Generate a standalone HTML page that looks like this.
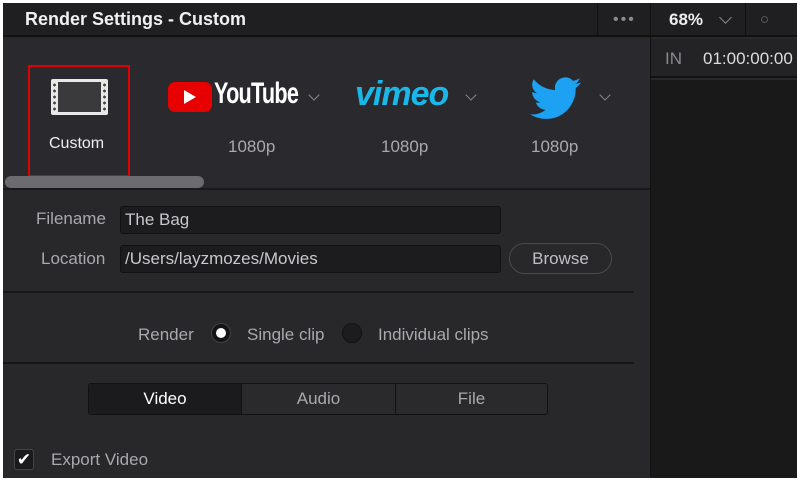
<!DOCTYPE html>
<html><head><style>
*{margin:0;padding:0;box-sizing:border-box}
body{width:800px;height:481px;background:#fff;position:relative;overflow:hidden;font-family:"Liberation Sans",sans-serif}
.a{position:absolute}
#main{left:3px;top:3px;width:794px;height:475px;background:#28282b;overflow:hidden}
.t{color:#a9a9ad;font-size:17px}
.inp{background:#1c1c1e;border:1px solid #111;border-radius:3px;color:#c8c8cc;font-size:17px;padding:3px 4px;line-height:20px}
</style></head><body>
<div id="main" class="a">
 <div class="a" style="left:0;top:0;width:794px;height:34px;background:#1f1f22;border-bottom:2px solid #111"></div>
 <div class="a" style="left:22px;top:6px;color:#f0f0f0;font-weight:bold;font-size:18px">Render Settings - Custom</div>
 <div class="a" style="left:594px;top:0;width:1px;height:34px;background:#111"></div>
 <div class="a" style="left:610px;top:8px;color:#8a8a8e;font-size:16px;letter-spacing:2px">•••</div>
 <div class="a" style="left:647px;top:0;width:1px;height:474px;background:#111"></div>
 <div class="a" style="left:666px;top:7px;color:#eee;font-weight:bold;font-size:17px">68%</div>
 <div class="a" style="left:718px;top:10px;width:9px;height:9px;border-right:1.5px solid #888;border-bottom:1.5px solid #888;transform:rotate(45deg)"></div>
 <div class="a" style="left:742px;top:0;width:1px;height:34px;background:#111"></div>
 <div class="a" style="left:758px;top:13px;width:7px;height:7px;border:1px solid #555;border-radius:50%"></div>
 <div class="a" style="left:648px;top:36px;width:146px;height:39px;background:#232326;border-bottom:2px solid #111"></div>
 <div class="a" style="left:648px;top:77px;width:146px;height:400px;background:#19191a"></div>
 <div class="a" style="left:662px;top:46px;color:#8a8a8e;font-size:17px">IN</div>
 <div class="a" style="left:700px;top:46px;color:#ddd;font-size:17px">01:00:00:00</div>
 <div class="a" style="left:0;top:36px;width:647px;height:151px;background:#2a2a2e;border-bottom:2px solid #1a1a1c"></div>
 <div class="a" style="left:25px;top:62px;width:102px;height:112px;border:2px solid #e00000"></div>
 <div class="a" style="left:48px;top:76px;width:57px;height:36px;background:#e8e8e8;border-radius:2px"></div>
 <div class="a" style="left:55px;top:79px;width:43px;height:30px;background:#3a3a3c"></div>
 <div class="a" style="left:50px;top:79px;width:3px;height:30px;background:radial-gradient(circle,#444 40%,transparent 45%) 0 0/3px 6px"></div>
 <div class="a" style="left:100px;top:79px;width:3px;height:30px;background:radial-gradient(circle,#444 40%,transparent 45%) 0 0/3px 6px"></div>
 <div class="a" style="left:46px;top:132px;color:#eee;font-size:16px">Custom</div>
 <div class="a" style="left:2px;top:173px;width:199px;height:12px;background:#6c6c70;border-radius:6px"></div>
 <div class="a" style="left:165px;top:79px;width:44px;height:30px;background:#e60000;border-radius:7px"></div>
 <div class="a" style="left:181px;top:87px;width:0;height:0;border-left:12px solid #fff;border-top:7px solid transparent;border-bottom:7px solid transparent"></div>
 <div class="a" style="left:211px;top:74px;color:#fff;font-size:30px;font-weight:bold;transform:scaleX(0.72);transform-origin:left;letter-spacing:-1px">YouTube</div>
 <div class="a" style="left:307px;top:88px;width:8px;height:8px;border-right:1.5px solid #888;border-bottom:1.5px solid #888;transform:rotate(45deg)"></div>
 <div class="a" style="left:225px;top:134px"><span class="t">1080p</span></div>
 <div class="a" style="left:352px;top:72px;color:#1ab7ea;font-size:34px;font-weight:bold;font-style:italic;letter-spacing:-1px">vimeo</div>
 <div class="a" style="left:464px;top:88px;width:8px;height:8px;border-right:1.5px solid #888;border-bottom:1.5px solid #888;transform:rotate(45deg)"></div>
 <div class="a" style="left:378px;top:134px"><span class="t">1080p</span></div>
 <svg class="a" style="left:527px;top:74px" width="52" height="44" viewBox="0 0 24 20"><path fill="#1da1f2" d="M23.6 2.3c-.9.4-1.8.6-2.8.8 1-.6 1.8-1.6 2.1-2.7-.9.6-2 1-3.1 1.2C19 .6 17.7 0 16.3 0c-2.7 0-4.8 2.200-4.8 4.8 0 .4 0 .8.1 1.1C7.6 5.700 4 3.8 1.7.9c-.4.7-.7 1.6-.7 2.4 0 1.7.9 3.2 2.2 4-.8 0-1.5-.2-2.2-.6v.1c0 2.3 1.7 4.3 3.9 4.7-.4.1-.8.2-1.3.2-.3 0-.6 0-.9-.1.6 1.9 2.4 3.3 4.5 3.4-1.7 1.3-3.7 2.1-6 2.100-.4 0-.8 0-1.200-.1 2.1 1.4 4.7 2.200 7.4 2.200 8.9 0 13.7-7.400 13.7-13.700v-.6c1-.7 1.8-1.5 2.5-2.5z"/></svg>
 <div class="a" style="left:598px;top:88px;width:8px;height:8px;border-right:1.5px solid #888;border-bottom:1.5px solid #888;transform:rotate(45deg)"></div>
 <div class="a" style="left:528px;top:134px"><span class="t">1080p</span></div>
 <div class="a t" style="left:33px;top:206px">Filename</div>
 <div class="a inp" style="left:117px;top:203px;width:381px;height:28px">The Bag</div>
 <div class="a t" style="left:38px;top:246px">Location</div>
 <div class="a inp" style="left:117px;top:242px;width:381px;height:28px">/Users/layzmozes/Movies</div>
 <div class="a" style="left:506px;top:240px;width:103px;height:31px;border:1px solid #4a4a4e;border-radius:16px;color:#c0c0c4;font-size:17px;text-align:center;line-height:29px">Browse</div>
 <div class="a" style="left:0;top:288px;width:631px;height:2px;background:#161618"></div>
 <div class="a t" style="left:135px;top:322px">Render</div>
 <div class="a" style="left:208px;top:320px;width:20px;height:20px;border-radius:50%;background:#141414;border:1px solid #444"></div>
 <div class="a" style="left:213px;top:325px;width:10px;height:10px;border-radius:50%;background:#fff"></div>
 <div class="a t" style="left:244px;top:322px">Single clip</div>
 <div class="a" style="left:339px;top:320px;width:20px;height:20px;border-radius:50%;background:#1c1c1e;border:1px solid #111"></div>
 <div class="a t" style="left:375px;top:322px">Individual clips</div>
 <div class="a" style="left:0;top:359px;width:631px;height:2px;background:#161618"></div>
 <div class="a" style="left:85px;top:380px;width:460px;height:32px;background:#2a2a2d;border:1px solid #111;border-radius:3px"></div>
 <div class="a" style="left:86px;top:381px;width:152px;height:30px;background:#1b1b1d;color:#fff;font-size:17px;text-align:center;line-height:30px">Video</div>
 <div class="a" style="left:238px;top:381px;width:1px;height:30px;background:#111"></div>
 <div class="a" style="left:239px;top:381px;width:153px;height:30px;color:#a9a9ad;font-size:17px;text-align:center;line-height:30px">Audio</div>
 <div class="a" style="left:392px;top:381px;width:1px;height:30px;background:#111"></div>
 <div class="a" style="left:393px;top:381px;width:151px;height:30px;color:#a9a9ad;font-size:17px;text-align:center;line-height:30px">File</div>
 <div class="a" style="left:11px;top:446px;width:20px;height:21px;background:#1a1a1c;border:1px solid #444;border-radius:3px;color:#fff;font-size:17px;text-align:center;line-height:19px">✔</div>
 <div class="a t" style="left:48px;top:447px">Export Video</div>
</div>
</body></html>
